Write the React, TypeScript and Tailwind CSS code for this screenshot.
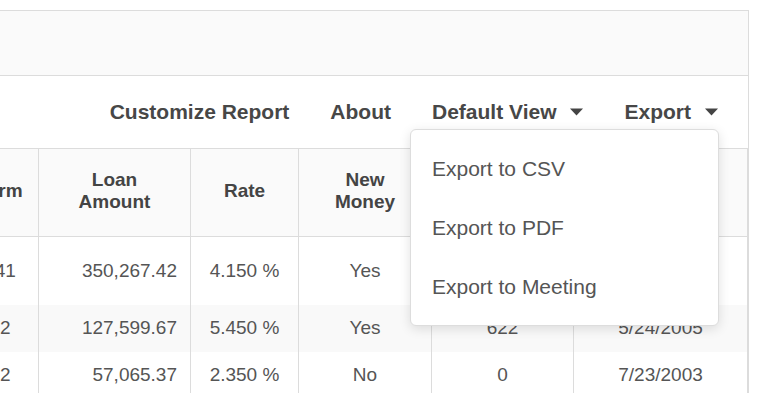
import React from "react";

const Caret = () => (
  <svg width="13" height="8" viewBox="0 0 13 8" className="ml-[14px]">
    <path d="M0 0.5 L13 0.5 L6.5 7.5 Z" fill="#444" />
  </svg>
);

const cell = "border-r border-[#dcdcdc] flex items-center justify-center";

export default function App() {
  const headers = [["Term"], ["Loan", "Amount"], ["Rate"], ["New", "Money"], [], []];
  const rows = [
    { h: "h-[68px]", bg: "bg-white", v: ["341", "350,267.42", "4.150 %", "Yes", "", ""] },
    { h: "h-[47px]", bg: "bg-[#f9f9f9]", v: ["12", "127,599.67", "5.450 %", "Yes", "622", "5/24/2005"] },
    { h: "h-[47px]", bg: "bg-white", v: ["12", "57,065.37", "2.350 %", "No", "0", "7/23/2003"] },
  ];
  const grid = "grid grid-cols-[77px_152px_108px_133px_142px_174px]";
  return (
    <div
      className="relative w-[759px] h-[393px] overflow-hidden bg-white pt-[10px]"
      style={{ fontFamily: '"Liberation Sans", Arial, sans-serif' }}
    >
      <div className="w-[749px] h-[400px] border-t border-r border-[#dcdcdc] overflow-hidden">
        <div className="h-[65px] bg-[#fafafa] border-b border-[#dcdcdc]" />
        <div className="h-[72px] flex items-center justify-end gap-[41px] pr-[30px] text-[21px] font-bold text-[#474747]">
          <span>Customize Report</span>
          <span>About</span>
          <span className="flex items-center">
            Default View
            <Caret />
          </span>
          <span className="flex items-center">
            Export
            <Caret />
          </span>
        </div>
        <div className="ml-[-38px] w-[786px] border-t border-[#dcdcdc]">
          <div className={`${grid} h-[88px] bg-[#fafafa] border-b border-[#dcdcdc] text-[19px] leading-[22px] font-bold text-[#444]`}>
            {headers.map((h, i) => (
              <div key={i} className={`${cell} flex-col text-center pb-[4px]`}>
                {h.map((l) => (
                  <span key={l}>{l}</span>
                ))}
              </div>
            ))}
          </div>
          {rows.map((r, ri) => (
            <div key={ri} className={`${grid} ${r.h} ${r.bg} text-[19px] text-[#555]`}>
              {r.v.map((v, i) => (
                <div
                  key={i}
                  className={
                    i === 1
                      ? "border-r border-[#dcdcdc] flex items-center justify-end pr-[13px]"
                      : cell
                  }
                >
                  {v}
                </div>
              ))}
            </div>
          ))}
        </div>
      </div>

      <div className="absolute left-[410px] top-[129px] w-[309px] rounded-[6px] border border-[#dddddd] bg-white py-[9px] shadow-[0_3px_12px_rgba(0,0,0,0.12)] text-[21px] text-[#555]">
        <div className="h-[59px] flex items-center pl-[21px]">Export to CSV</div>
        <div className="h-[59px] flex items-center pl-[21px]">Export to PDF</div>
        <div className="h-[59px] flex items-center pl-[21px]">Export to Meeting</div>
      </div>
    </div>
  );
}
